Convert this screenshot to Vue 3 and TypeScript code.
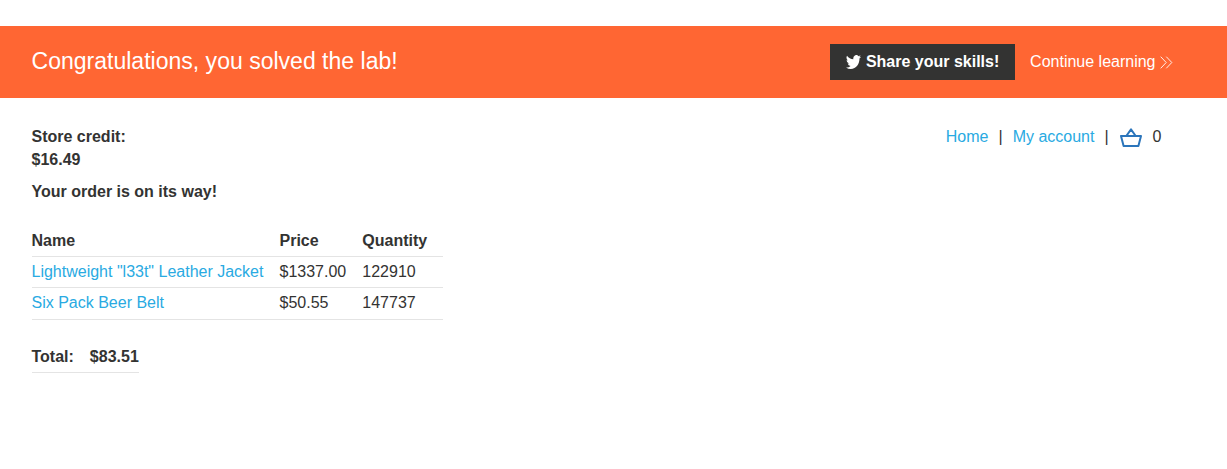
<script setup lang="ts">
interface OrderLine {
  name: string
  price: string
  quantity: number
}

const credit = '$16.49'
const total = '$83.51'
const basketCount = 0
const lines: OrderLine[] = [
  { name: 'Lightweight "l33t" Leather Jacket', price: '$1337.00', quantity: 122910 },
  { name: 'Six Pack Beer Belt', price: '$50.55', quantity: 147737 },
]
</script>

<template>
  <div class="page">
    <section class="banner">
      <h4 class="banner-title">Congratulations, you solved the lab!</h4>
      <div class="banner-actions">
        <a class="share">
          <svg class="bird" viewBox="0 2.2 24 19.6" preserveAspectRatio="none" aria-hidden="true">
            <path d="M23.95 4.57a10 10 0 0 1-2.82.77 4.96 4.96 0 0 0 2.16-2.72c-.95.55-2 .95-3.13 1.18a4.92 4.92 0 0 0-8.38 4.48C7.69 8.1 4.07 6.13 1.64 3.16a4.93 4.93 0 0 0 1.52 6.57 4.9 4.9 0 0 1-2.23-.61v.06a4.92 4.92 0 0 0 3.95 4.83 5 5 0 0 1-2.21.08 4.94 4.94 0 0 0 4.6 3.42A9.87 9.87 0 0 1 0 19.54a14 14 0 0 0 7.55 2.21c9.05 0 14-7.5 14-13.99 0-.21 0-.42-.02-.63a9.94 9.94 0 0 0 2.46-2.55z" />
          </svg>
          <span class="label">Share your skills!</span>
        </a>
        <a class="continue">
          <span class="label">Continue learning</span>
          <svg class="chevrons" viewBox="0 0 13 13" aria-hidden="true">
            <path d="M0.7 0.7 6.2 6.5 0.7 12.3M6.3 0.7 11.8 6.5 6.3 12.3" />
          </svg>
        </a>
      </div>
    </section>

    <main class="content">
      <header class="top">
        <div class="credit">
          <strong>Store credit:</strong>
          <strong>{{ credit }}</strong>
        </div>
        <nav class="links">
          <a>Home</a>
          <span class="bar">|</span>
          <a>My account</a>
          <span class="bar">|</span>
          <svg class="basket" viewBox="0 0 22 20" aria-hidden="true">
            <path d="M1 8H21L18.4 18H3.6ZM6.3 8 11 1.4 15.7 8" />
          </svg>
          <span class="count">{{ basketCount }}</span>
        </nav>
      </header>

      <strong class="notice">Your order is on its way!</strong>

      <table class="order">
        <thead>
          <tr>
            <th class="name">Name</th>
            <th class="price">Price</th>
            <th class="quantity">Quantity</th>
          </tr>
        </thead>
        <tbody>
          <tr v-for="line in lines" :key="line.name">
            <td><a>{{ line.name }}</a></td>
            <td>{{ line.price }}</td>
            <td>{{ line.quantity }}</td>
          </tr>
        </tbody>
      </table>

      <div class="total">
        <span>Total:</span>
        <span>{{ total }}</span>
      </div>
    </main>
  </div>
</template>

<style>
body {
  background: #fff;
}
</style>

<style scoped>
.page {
  padding-top: 26px;
  color: #333332;
  font: 16px/23px "Liberation Sans", Arial, sans-serif;
}
.banner {
  display: flex;
  align-items: center;
  justify-content: space-between;
  height: 72px;
  padding: 0 54px 0 31.5px;
  box-sizing: border-box;
  background: #ff6633;
  color: #fff;
}
.banner-title {
  margin: 0 0 2px;
  font-size: 23.04px;
  font-weight: 400;
  line-height: 30px;
}
.banner-actions,
.share,
.continue {
  display: flex;
  align-items: center;
}
.label {
  padding-bottom: 2px;
}
.share {
  width: 185px;
  height: 36px;
  margin-right: 15.3px;
  padding-left: 16px;
  box-sizing: border-box;
  background: #333332;
  font-weight: 700;
  white-space: nowrap;
}
.bird {
  width: 15px;
  height: 14px;
  margin-right: 5.1px;
  fill: #fff;
}
.chevrons {
  width: 13px;
  height: 13px;
  margin-left: 4.5px;
  fill: none;
  stroke: #fff;
  stroke-width: 0.9;
}
.content {
  padding: 27px 65.5px 0 31.5px;
}
.top {
  display: flex;
  justify-content: space-between;
  align-items: flex-start;
}
.credit {
  display: flex;
  flex-direction: column;
}
.links {
  display: flex;
  align-items: center;
}
.links a,
.order a {
  color: #29aae2;
}
.bar {
  margin: 0 10px;
}
.basket {
  width: 22px;
  height: 20px;
  margin: 2px 11px 0 1px;
  fill: none;
  stroke: #2b75bb;
  stroke-width: 2;
  stroke-linejoin: round;
}
.notice {
  display: block;
  margin-top: 9px;
}
.order {
  width: 411.5px;
  margin-top: 23px;
  border-collapse: collapse;
  table-layout: fixed;
}
.order th,
.order td {
  height: 23px;
  padding: 3px 0 4px;
  border-bottom: 1px solid #e4e4e4;
  text-align: left;
}
.order tr:last-child td {
  padding-bottom: 5px;
}
.order thead tr:last-child th {
  padding-bottom: 4px;
}
.name {
  width: 248px;
}
.price {
  width: 82.8px;
}
.total {
  display: flex;
  gap: 16px;
  width: max-content;
  margin-top: 25px;
  padding-bottom: 4px;
  border-bottom: 1px solid #e4e4e4;
  font-weight: 700;
}
</style>
